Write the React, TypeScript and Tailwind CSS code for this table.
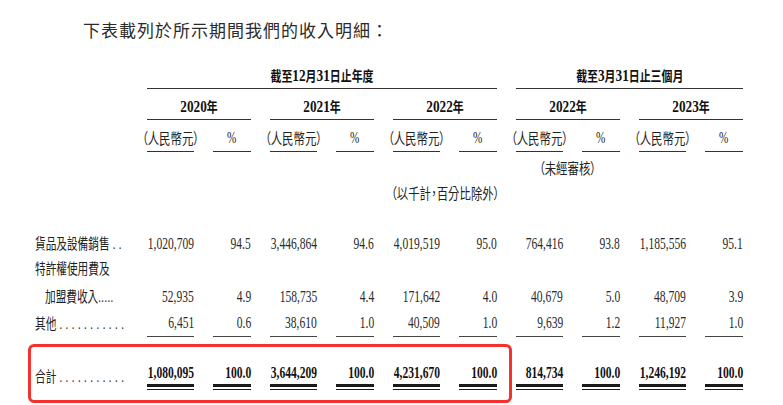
import React from 'react';

// one grid template for all table rows: label column + 5 groups of (RMB, %)
const grid =
	'grid grid-cols-[128px_47px_38px_47px_38px_47px_38px_47px_38px_47px_38px] gap-x-[19px]';
const serif = "font-['Liberation_Serif','Noto_Sans_CJK_TC',serif]";
const cjk = "font-['Noto_Sans_CJK_TC','Noto_Sans_CJK_SC',sans-serif]";

type Row = { label: string; indent?: boolean; vals?: string[]; rule?: boolean; gap: string };

const rows: Row[] = [
	{
		label: '貨品及設備銷售',
		vals: ['1,020,709', '94.5', '3,446,864', '94.6', '4,019,519', '95.0', '764,416', '93.8', '1,185,556', '95.1'],
		gap: 'mt-[26px]',
	},
	{ label: '特許權使用費及', gap: 'mt-[1px]' },
	{
		label: '加盟費收入',
		indent: true,
		vals: ['52,935', '4.9', '158,735', '4.4', '171,642', '4.0', '40,679', '5.0', '48,709', '3.9'],
		gap: 'mt-[4px]',
	},
	{
		label: '其他',
		vals: ['6,451', '0.6', '38,610', '1.0', '40,509', '1.0', '9,639', '1.2', '11,927', '1.0'],
		rule: true,
		gap: 'mt-[2px]',
	},
];

const totals = ['1,080,095', '100.0', '3,644,209', '100.0', '4,231,670', '100.0', '814,734', '100.0', '1,246,192', '100.0'];

// header text: digits in a bigger serif, CJK smaller, whole thing squeezed
function Head({ text }: { text: string }) {
	const parts = text.match(/\d+|\D+/g) ?? [];
	return (
		<span className={`inline-block origin-center scale-x-[0.78] whitespace-nowrap font-bold text-[#111] ${serif}`}>
			{parts.map((p, i) =>
				/\d/.test(p) ? (
					<span key={i} className="text-[17px]">
						{p}
					</span>
				) : (
					<span key={i} className={`text-[14px] ${cjk}`}>
						{p}
					</span>
				),
			)}
		</span>
	);
}

function Paren({ text }: { text: string }) {
	return (
		<span
			className={`inline-block origin-center scale-x-[0.76] whitespace-nowrap text-[15px] text-[#222] [font-feature-settings:'palt'] ${cjk}`}
		>
			{text}
		</span>
	);
}

function Num({ v, bold }: { v: string; bold?: boolean }) {
	return (
		<span
			className={`inline-block origin-right scale-x-[0.68] whitespace-nowrap text-[17px] ${serif} ${bold ? 'font-bold text-[#111]' : 'text-[#2a2a2a]'}`}
		>
			{v}
		</span>
	);
}

function Label({ text, dots, indent }: { text: string; dots?: string; indent?: boolean }) {
	return (
		<div className={`flex items-center ${indent ? 'pl-[45px]' : 'pl-[35px]'}`}>
			<span className="inline-block origin-left scale-x-[0.71] whitespace-nowrap text-[15px] text-[#222]">
				<span className={cjk}>{text}</span>
				{dots && <span className={`${serif} tracking-[0.6px]`}>{dots}</span>}
			</span>
		</div>
	);
}

const dotsFor: Record<string, string> = {
	貨品及設備銷售: ' . .',
	加盟費收入: '.....',
	其他: ' . . . . . . . . . . .',
};

export default function App() {
	return (
		<div className="relative h-[405px] w-[783px] overflow-hidden bg-white">
			<div className={`flex h-[60px] items-center pl-[83px] text-[17px] tracking-[1px] text-[#2b2b2b] ${cjk}`}>
				下表載列於所示期間我們的收入明細：
			</div>

			{/* period headers */}
			<div className={grid}>
				<div />
				<div className="col-span-6 flex h-[29px] items-end justify-center border-b border-[#333] pb-[4px] leading-[16px]">
					<Head text="截至12月31日止年度" />
				</div>
				<div className="col-span-4 flex h-[29px] items-end justify-center border-b border-[#333] pb-[4px] leading-[16px]">
					<Head text="截至3月31日止三個月" />
				</div>
			</div>

			<div className={grid}>
				<div />
				{['2020年', '2021年', '2022年', '2022年', '2023年'].map((y, i) => (
					<div
						key={i}
						className="col-span-2 flex h-[31px] items-end justify-center border-b border-[#333] pb-[4px] leading-[16px]"
					>
						<Head text={y} />
					</div>
				))}
			</div>

			<div className={grid}>
				<div />
				{Array.from({ length: 10 }).map((_, i) => (
					<div
						key={i}
						className="flex h-[32px] items-end justify-center border-b border-[#333] pb-[5px] leading-[16px]"
					>
						{i % 2 === 0 ? (
							<Paren text="（人民幣元）" />
						) : (
							<span className={`inline-block origin-center scale-x-[0.7] text-[16px] text-[#222] ${serif}`}>%</span>
						)}
					</div>
				))}
			</div>

			<div className={`${grid} h-[28px] pt-[8px] leading-[16px]`}>
				<div className="col-start-8 col-span-2 flex justify-center">
					<Paren text="（未經審核）" />
				</div>
			</div>
			<div className={`${grid} h-[25px] pt-[5px] leading-[16px]`}>
				<div className="col-start-6 col-span-2 flex justify-center">
					<Paren text="（以千計，百分比除外）" />
				</div>
			</div>

			{/* body rows */}
			{rows.map((r) => (
				<div key={r.label} className={`${grid} ${r.gap} ${r.rule ? 'h-[26px]' : 'h-[24px]'}`}>
					<Label text={r.label} dots={dotsFor[r.label]} indent={r.indent} />
					{r.vals?.map((v, i) => (
						<div
							key={i}
							className={`flex items-center justify-end ${r.rule ? 'border-b border-[#444]' : ''}`}
						>
							<Num v={v} />
						</div>
					))}
				</div>
			))}

			{/* total */}
			<div className={`${grid} mt-[27px]`}>
				<Label text="合計" dots=" . . . . . . . . . . ." />
				{totals.map((v, i) => (
					<div key={i} className="flex flex-col">
						<div className="flex h-[20px] items-center justify-end">
							<Num v={v} bold />
						</div>
						<div className="mt-[1px] h-[3px] bg-[#1a1a1a]" />
						<div className="mt-[2px] h-px bg-[#1a1a1a]" />
					</div>
				))}
			</div>

			{/* red highlight box drawn over the total row */}
			<div className="pointer-events-none absolute left-[28px] top-[344px] h-[59px] w-[484px] rounded-[6px] border-[3px] border-[#f5312d]" />
		</div>
	);
}
